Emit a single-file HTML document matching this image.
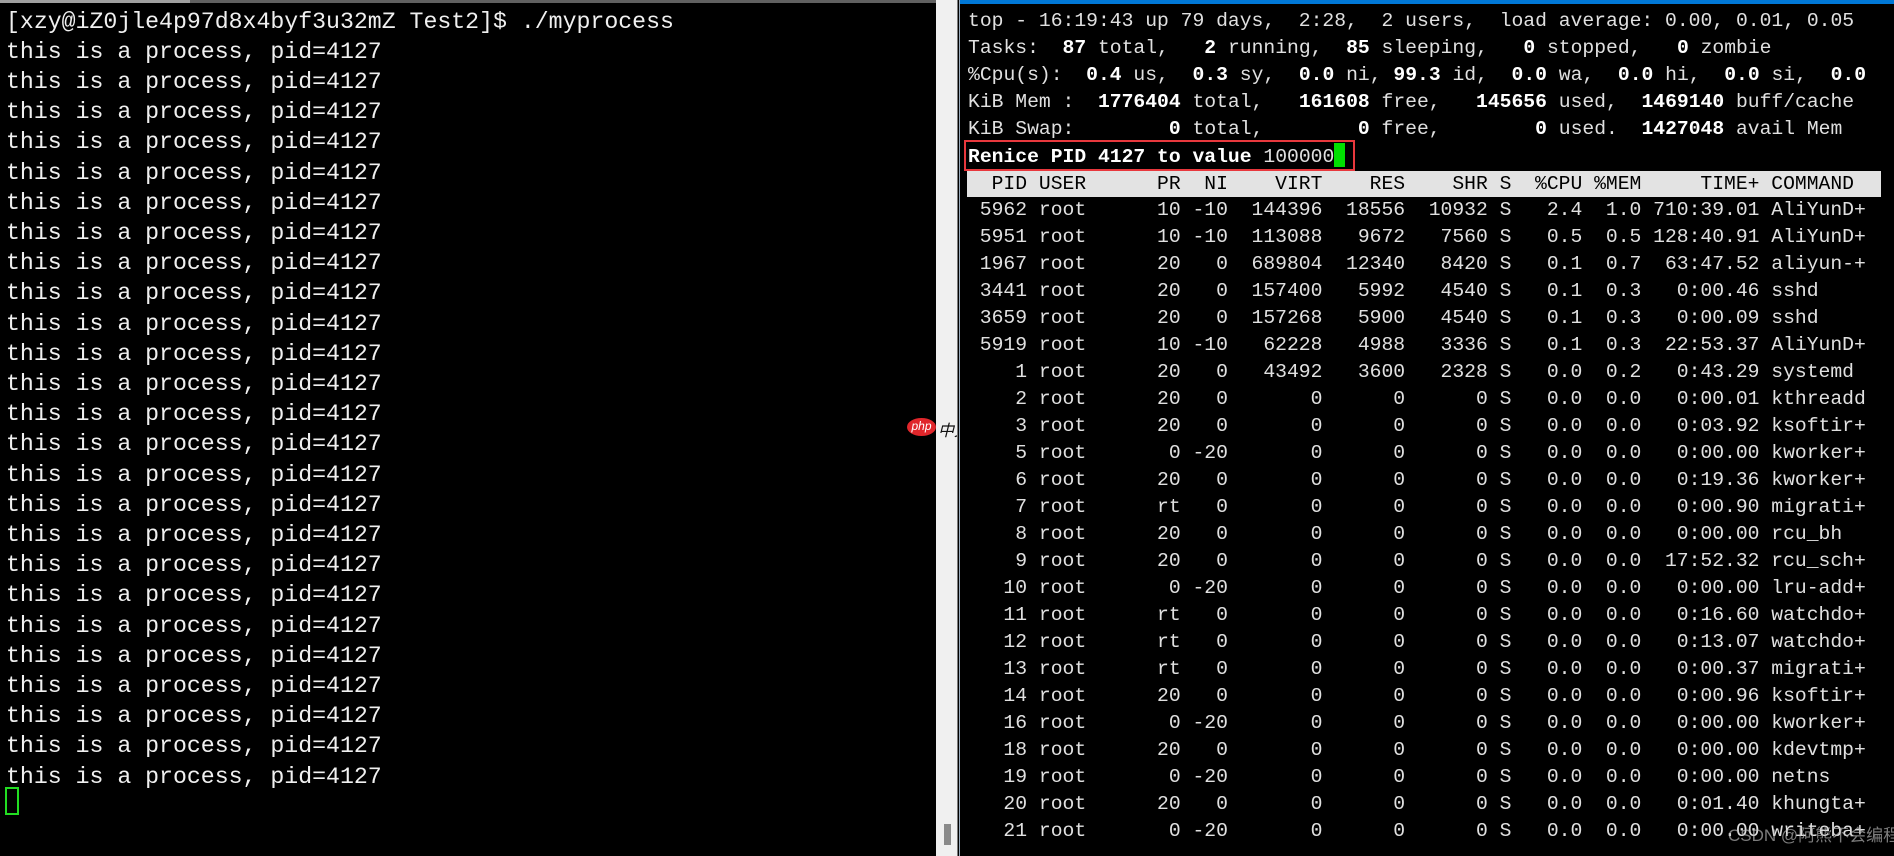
<!DOCTYPE html>
<html><head><meta charset="utf-8"><style>
*{margin:0;padding:0;box-sizing:border-box}
body{width:1894px;height:856px;background:#000;position:relative;overflow:hidden;font-family:"Liberation Mono",monospace}
#L{position:absolute;left:6px;top:6.6px;font-size:23.2px;line-height:30.2px;color:#f0f0f0;white-space:pre}
#R{position:absolute;left:968px;top:8.2px;font-size:19.7px;line-height:27px;color:#e0e0e0}
#R>div{white-space:pre;height:27px}
#R b{color:#fff}
.r span{display:inline-block;text-align:right}
.a{width:5ch}.u{width:9ch;text-align:left!important;padding-left:1ch}.p{width:4ch}.n{width:4ch}.v{width:8ch}.s7{width:7ch}.st{width:2ch}.c{width:6ch}.m{width:5ch}.t{width:10ch}.cm{text-align:left!important;padding-left:1ch}
#R>.hd{background:#e3e3e3;color:#000;width:914px;margin-left:-1px;padding-left:1px;height:26px;margin-top:1px}
</style></head><body>
<div style="position:absolute;left:0;top:0;width:190px;height:3px;background:#a0a0a0"></div>
<div style="position:absolute;left:190px;top:0;width:746px;height:3px;background:#606060"></div>
<div style="position:absolute;left:960px;top:0;width:934px;height:4px;background:#0078d7"></div>
<div style="position:absolute;left:936px;top:0;width:22px;height:856px;background:#f0f0f0"></div>
<div style="position:absolute;left:957px;top:0;width:1px;height:856px;background:#7a7a7a"></div>
<div style="position:absolute;left:959px;top:0;width:1px;height:856px;background:#9ab"></div>
<div style="position:absolute;left:944px;top:824px;width:7px;height:21px;background:#8a8a8a"></div>
<div style="position:absolute;left:907px;top:418px;width:29px;height:18px;border-radius:50%;background:#e0262b;color:#fff;font:italic 12px 'Liberation Sans',sans-serif;text-align:center;line-height:17px">php</div>
<div style="position:absolute;left:938px;top:417px;width:19px;overflow:hidden;font:italic 16px 'Noto Sans CJK SC',sans-serif;color:#111;white-space:nowrap">中文</div>
<div id="L">[xzy@iZ0jle4p97d8x4byf3u32mZ Test2]$ ./myprocess
this is a process, pid=4127
this is a process, pid=4127
this is a process, pid=4127
this is a process, pid=4127
this is a process, pid=4127
this is a process, pid=4127
this is a process, pid=4127
this is a process, pid=4127
this is a process, pid=4127
this is a process, pid=4127
this is a process, pid=4127
this is a process, pid=4127
this is a process, pid=4127
this is a process, pid=4127
this is a process, pid=4127
this is a process, pid=4127
this is a process, pid=4127
this is a process, pid=4127
this is a process, pid=4127
this is a process, pid=4127
this is a process, pid=4127
this is a process, pid=4127
this is a process, pid=4127
this is a process, pid=4127
this is a process, pid=4127</div>
<div style="position:absolute;left:5px;top:787px;width:14px;height:28px;border:2px solid #22dd22"></div>
<div id="R"><div>top - 16:19:43 up 79 days,  2:28,  2 users,  load average: 0.00, 0.01, 0.05</div><div>Tasks: <b> 87</b> total, <b>  2</b> running, <b> 85</b> sleeping, <b>  0</b> stopped, <b>  0</b> zombie</div><div>%Cpu(s): <b> 0.4</b> us, <b> 0.3</b> sy, <b> 0.0</b> ni, <b>99.3</b> id, <b> 0.0</b> wa, <b> 0.0</b> hi, <b> 0.0</b> si, <b> 0.0</b></div><div>KiB Mem : <b> 1776404</b> total, <b>  161608</b> free, <b>  145656</b> used, <b> 1469140</b> buff/cache</div><div>KiB Swap:<b>        0</b> total, <b>       0</b> free, <b>       0</b> used. <b> 1427048</b> avail Mem</div><div><b>Renice PID 4127 to value </b>100000<span style="display:inline-block;width:11px;height:24px;background:#00e000;vertical-align:-5px"></span></div><div class="r hd"><span class="a">PID</span><span class="u">USER</span><span class="p">PR</span><span class="n">NI</span><span class="v">VIRT</span><span class="s7">RES</span><span class="s7">SHR</span><span class="st">S</span><span class="c">%CPU</span><span class="m">%MEM</span><span class="t">TIME+</span><span class="cm">COMMAND</span></div><div class="r"><span class="a">5962</span><span class="u">root</span><span class="p">10</span><span class="n">-10</span><span class="v">144396</span><span class="s7">18556</span><span class="s7">10932</span><span class="st">S</span><span class="c">2.4</span><span class="m">1.0</span><span class="t">710:39.01</span><span class="cm">AliYunD+</span></div><div class="r"><span class="a">5951</span><span class="u">root</span><span class="p">10</span><span class="n">-10</span><span class="v">113088</span><span class="s7">9672</span><span class="s7">7560</span><span class="st">S</span><span class="c">0.5</span><span class="m">0.5</span><span class="t">128:40.91</span><span class="cm">AliYunD+</span></div><div class="r"><span class="a">1967</span><span class="u">root</span><span class="p">20</span><span class="n">0</span><span class="v">689804</span><span class="s7">12340</span><span class="s7">8420</span><span class="st">S</span><span class="c">0.1</span><span class="m">0.7</span><span class="t">63:47.52</span><span class="cm">aliyun-+</span></div><div class="r"><span class="a">3441</span><span class="u">root</span><span class="p">20</span><span class="n">0</span><span class="v">157400</span><span class="s7">5992</span><span class="s7">4540</span><span class="st">S</span><span class="c">0.1</span><span class="m">0.3</span><span class="t">0:00.46</span><span class="cm">sshd</span></div><div class="r"><span class="a">3659</span><span class="u">root</span><span class="p">20</span><span class="n">0</span><span class="v">157268</span><span class="s7">5900</span><span class="s7">4540</span><span class="st">S</span><span class="c">0.1</span><span class="m">0.3</span><span class="t">0:00.09</span><span class="cm">sshd</span></div><div class="r"><span class="a">5919</span><span class="u">root</span><span class="p">10</span><span class="n">-10</span><span class="v">62228</span><span class="s7">4988</span><span class="s7">3336</span><span class="st">S</span><span class="c">0.1</span><span class="m">0.3</span><span class="t">22:53.37</span><span class="cm">AliYunD+</span></div><div class="r"><span class="a">1</span><span class="u">root</span><span class="p">20</span><span class="n">0</span><span class="v">43492</span><span class="s7">3600</span><span class="s7">2328</span><span class="st">S</span><span class="c">0.0</span><span class="m">0.2</span><span class="t">0:43.29</span><span class="cm">systemd</span></div><div class="r"><span class="a">2</span><span class="u">root</span><span class="p">20</span><span class="n">0</span><span class="v">0</span><span class="s7">0</span><span class="s7">0</span><span class="st">S</span><span class="c">0.0</span><span class="m">0.0</span><span class="t">0:00.01</span><span class="cm">kthreadd</span></div><div class="r"><span class="a">3</span><span class="u">root</span><span class="p">20</span><span class="n">0</span><span class="v">0</span><span class="s7">0</span><span class="s7">0</span><span class="st">S</span><span class="c">0.0</span><span class="m">0.0</span><span class="t">0:03.92</span><span class="cm">ksoftir+</span></div><div class="r"><span class="a">5</span><span class="u">root</span><span class="p">0</span><span class="n">-20</span><span class="v">0</span><span class="s7">0</span><span class="s7">0</span><span class="st">S</span><span class="c">0.0</span><span class="m">0.0</span><span class="t">0:00.00</span><span class="cm">kworker+</span></div><div class="r"><span class="a">6</span><span class="u">root</span><span class="p">20</span><span class="n">0</span><span class="v">0</span><span class="s7">0</span><span class="s7">0</span><span class="st">S</span><span class="c">0.0</span><span class="m">0.0</span><span class="t">0:19.36</span><span class="cm">kworker+</span></div><div class="r"><span class="a">7</span><span class="u">root</span><span class="p">rt</span><span class="n">0</span><span class="v">0</span><span class="s7">0</span><span class="s7">0</span><span class="st">S</span><span class="c">0.0</span><span class="m">0.0</span><span class="t">0:00.90</span><span class="cm">migrati+</span></div><div class="r"><span class="a">8</span><span class="u">root</span><span class="p">20</span><span class="n">0</span><span class="v">0</span><span class="s7">0</span><span class="s7">0</span><span class="st">S</span><span class="c">0.0</span><span class="m">0.0</span><span class="t">0:00.00</span><span class="cm">rcu_bh</span></div><div class="r"><span class="a">9</span><span class="u">root</span><span class="p">20</span><span class="n">0</span><span class="v">0</span><span class="s7">0</span><span class="s7">0</span><span class="st">S</span><span class="c">0.0</span><span class="m">0.0</span><span class="t">17:52.32</span><span class="cm">rcu_sch+</span></div><div class="r"><span class="a">10</span><span class="u">root</span><span class="p">0</span><span class="n">-20</span><span class="v">0</span><span class="s7">0</span><span class="s7">0</span><span class="st">S</span><span class="c">0.0</span><span class="m">0.0</span><span class="t">0:00.00</span><span class="cm">lru-add+</span></div><div class="r"><span class="a">11</span><span class="u">root</span><span class="p">rt</span><span class="n">0</span><span class="v">0</span><span class="s7">0</span><span class="s7">0</span><span class="st">S</span><span class="c">0.0</span><span class="m">0.0</span><span class="t">0:16.60</span><span class="cm">watchdo+</span></div><div class="r"><span class="a">12</span><span class="u">root</span><span class="p">rt</span><span class="n">0</span><span class="v">0</span><span class="s7">0</span><span class="s7">0</span><span class="st">S</span><span class="c">0.0</span><span class="m">0.0</span><span class="t">0:13.07</span><span class="cm">watchdo+</span></div><div class="r"><span class="a">13</span><span class="u">root</span><span class="p">rt</span><span class="n">0</span><span class="v">0</span><span class="s7">0</span><span class="s7">0</span><span class="st">S</span><span class="c">0.0</span><span class="m">0.0</span><span class="t">0:00.37</span><span class="cm">migrati+</span></div><div class="r"><span class="a">14</span><span class="u">root</span><span class="p">20</span><span class="n">0</span><span class="v">0</span><span class="s7">0</span><span class="s7">0</span><span class="st">S</span><span class="c">0.0</span><span class="m">0.0</span><span class="t">0:00.96</span><span class="cm">ksoftir+</span></div><div class="r"><span class="a">16</span><span class="u">root</span><span class="p">0</span><span class="n">-20</span><span class="v">0</span><span class="s7">0</span><span class="s7">0</span><span class="st">S</span><span class="c">0.0</span><span class="m">0.0</span><span class="t">0:00.00</span><span class="cm">kworker+</span></div><div class="r"><span class="a">18</span><span class="u">root</span><span class="p">20</span><span class="n">0</span><span class="v">0</span><span class="s7">0</span><span class="s7">0</span><span class="st">S</span><span class="c">0.0</span><span class="m">0.0</span><span class="t">0:00.00</span><span class="cm">kdevtmp+</span></div><div class="r"><span class="a">19</span><span class="u">root</span><span class="p">0</span><span class="n">-20</span><span class="v">0</span><span class="s7">0</span><span class="s7">0</span><span class="st">S</span><span class="c">0.0</span><span class="m">0.0</span><span class="t">0:00.00</span><span class="cm">netns</span></div><div class="r"><span class="a">20</span><span class="u">root</span><span class="p">20</span><span class="n">0</span><span class="v">0</span><span class="s7">0</span><span class="s7">0</span><span class="st">S</span><span class="c">0.0</span><span class="m">0.0</span><span class="t">0:01.40</span><span class="cm">khungta+</span></div><div class="r"><span class="a">21</span><span class="u">root</span><span class="p">0</span><span class="n">-20</span><span class="v">0</span><span class="s7">0</span><span class="s7">0</span><span class="st">S</span><span class="c">0.0</span><span class="m">0.0</span><span class="t">0:00.00</span><span class="cm">writeba+</span></div></div>
<div style="position:absolute;left:964px;top:140px;width:391px;height:31px;border:2px solid #e8383d"></div>
<div style="position:absolute;left:1728px;top:821px;font:17px 'Liberation Sans','Noto Sans CJK SC',sans-serif;color:rgba(190,190,190,0.65);white-space:nowrap">CSDN @阿熊不会编程</div>
</body></html>
